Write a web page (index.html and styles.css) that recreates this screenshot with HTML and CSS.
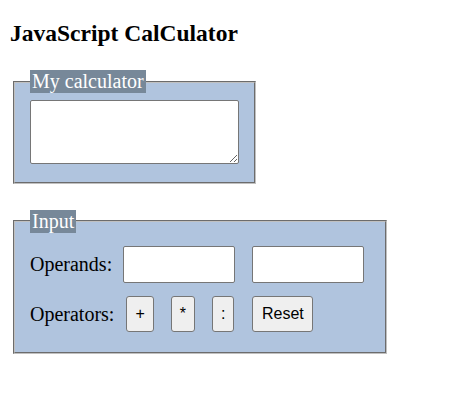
FILE: index.html
```html
<!DOCTYPE html>
<html>
<head>
<meta charset="utf-8">
<title>JavaScript CalCulator</title>
<link rel="stylesheet" href="styles.css">
</head>
<body>
<h2 class="title">JavaScript CalCulator</h2>
<fieldset class="panel panel-output">
  <legend class="panel-legend">My calculator</legend>
  <textarea class="display"></textarea>
</fieldset>
<fieldset class="panel panel-input">
  <legend class="panel-legend">Input</legend>
  <div class="row row-operands">
    <label class="row-label">Operands:</label>
    <input class="operand" type="text">
    <input class="operand" type="text">
  </div>
  <div class="row row-operators">
    <span class="row-label row-label-ops">Operators:</span>
    <button class="btn" type="button">+</button>
    <button class="btn" type="button">*</button>
    <button class="btn" type="button">:</button>
    <button class="btn btn-reset" type="button">Reset</button>
  </div>
</fieldset>
</body>
</html>
```
FILE: styles.css
```css
html, body {
  margin: 0;
  padding: 0;
  background: #ffffff;
}
body {
  padding: 0 8px;
  font-family: "Liberation Serif", "Times New Roman", serif;
  color: #000;
}
.title {
  margin: 0 0 22.5px 2px;
  padding-top: 20px;
  font-size: 23.5px;
  font-weight: bold;
  line-height: 27.5px;
}
.panel {
  display: block;
  width: fit-content;
  margin: 0 0 0 5px;
  padding: 7px 15px 12.5px 15px;
  border: 2px groove rgb(192, 192, 192);
  background: #b0c4de;
  font-size: 20px;
  min-width: 0;
}
.panel-output {
  margin-bottom: 26px;
}
.panel-input {
  padding-bottom: 13.5px;
}
.panel-legend {
  background: #778899;
  color: #ffffff;
  padding: 0 2px;
  line-height: 23px;
  font-size: 20px;
}
.display {
  display: block;
  box-sizing: border-box;
  width: 209px;
  height: 64px;
  margin: 0 0 5px 0;
  border: 1px solid #767676;
  border-radius: 2px;
  background: #fff;
}
.row {
  display: flex;
  align-items: center;
  gap: 5px;
}
.row-operands {
  height: 50.5px;
}
.row-operators {
  height: 48.5px;
}
.row-label {
  font-size: 20px;
}
.row-label-ops {
  margin-right: 1px;
}
.operand {
  box-sizing: border-box;
  width: 112px;
  height: 37px;
  margin: 0 6px;
  border: 1px solid #767676;
  border-radius: 2px;
  background: #fff;
  padding: 1px 2px;
}
.btn {
  box-sizing: border-box;
  height: 36px;
  margin: 0 6px;
  padding: 0 8px;
  border: 1px solid #767676;
  border-radius: 3px;
  background: #efefef;
  font-family: "Liberation Sans", Arial, sans-serif;
  font-size: 16px;
  color: #000;
}
.btn-reset {
  margin-left: 7px;
  padding: 0 8.5px;
}
```
